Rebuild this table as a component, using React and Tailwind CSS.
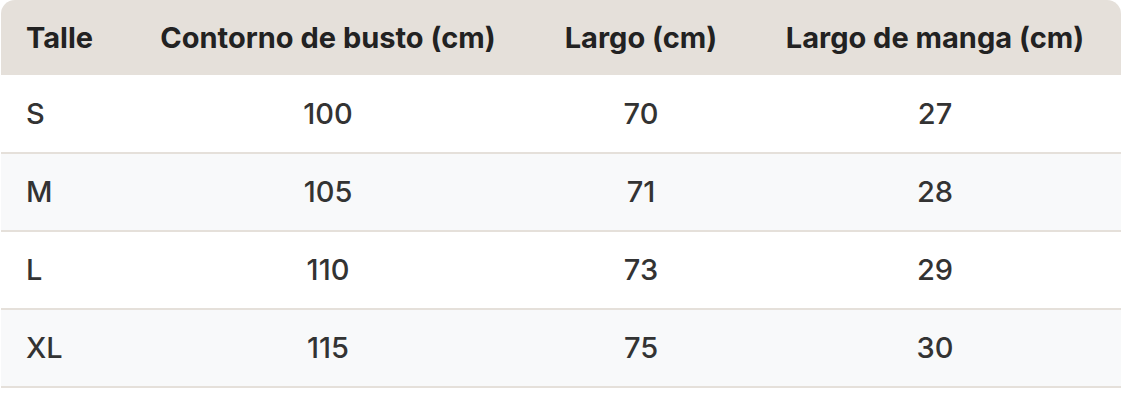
export default function App() {
  const rows = [
    ["S", "100", "70", "27"],
    ["M", "105", "71", "28"],
    ["L", "110", "73", "29"],
    ["XL", "115", "75", "30"],
  ];
  return (
    <div className="w-[1127px] h-[405px] bg-white pl-px" style={{ fontFamily: "Inter, 'Noto Sans', sans-serif" }}>
      <div className="w-[1120px] rounded-t-[14px] overflow-hidden">
        <table className="w-full border-collapse table-fixed">
          <colgroup>
            <col className="w-[122px]" />
            <col className="w-[410px]" />
            <col className="w-[216px]" />
            <col className="w-[372px]" />
          </colgroup>
          <thead>
            <tr className="bg-[#e5e0da] h-[75px]">
              <th className="text-left pl-[25px] text-[29px] font-bold text-[#222]">Talle</th>
              <th className="text-center text-[29px] font-bold text-[#222]">Contorno de busto (cm)</th>
              <th className="text-center text-[29px] font-bold text-[#222]">Largo (cm)</th>
              <th className="text-center text-[29px] font-bold text-[#222]">Largo de manga (cm)</th>
            </tr>
          </thead>
          <tbody>
            {rows.map((r, i) => (
              <tr key={i} className={`h-[78px] border-b-2 border-[#e5e0da] ${i % 2 === 1 ? "bg-[#f8f9fa]" : "bg-white"}`}>
                <td className="text-left pl-[25px] text-[29px] font-medium text-[#333]">{r[0]}</td>
                <td className="text-center text-[29px] font-medium text-[#333]">{r[1]}</td>
                <td className="text-center text-[29px] font-medium text-[#333]">{r[2]}</td>
                <td className="text-center text-[29px] font-medium text-[#333]">{r[3]}</td>
              </tr>
            ))}
          </tbody>
        </table>
      </div>
    </div>
  );
}
